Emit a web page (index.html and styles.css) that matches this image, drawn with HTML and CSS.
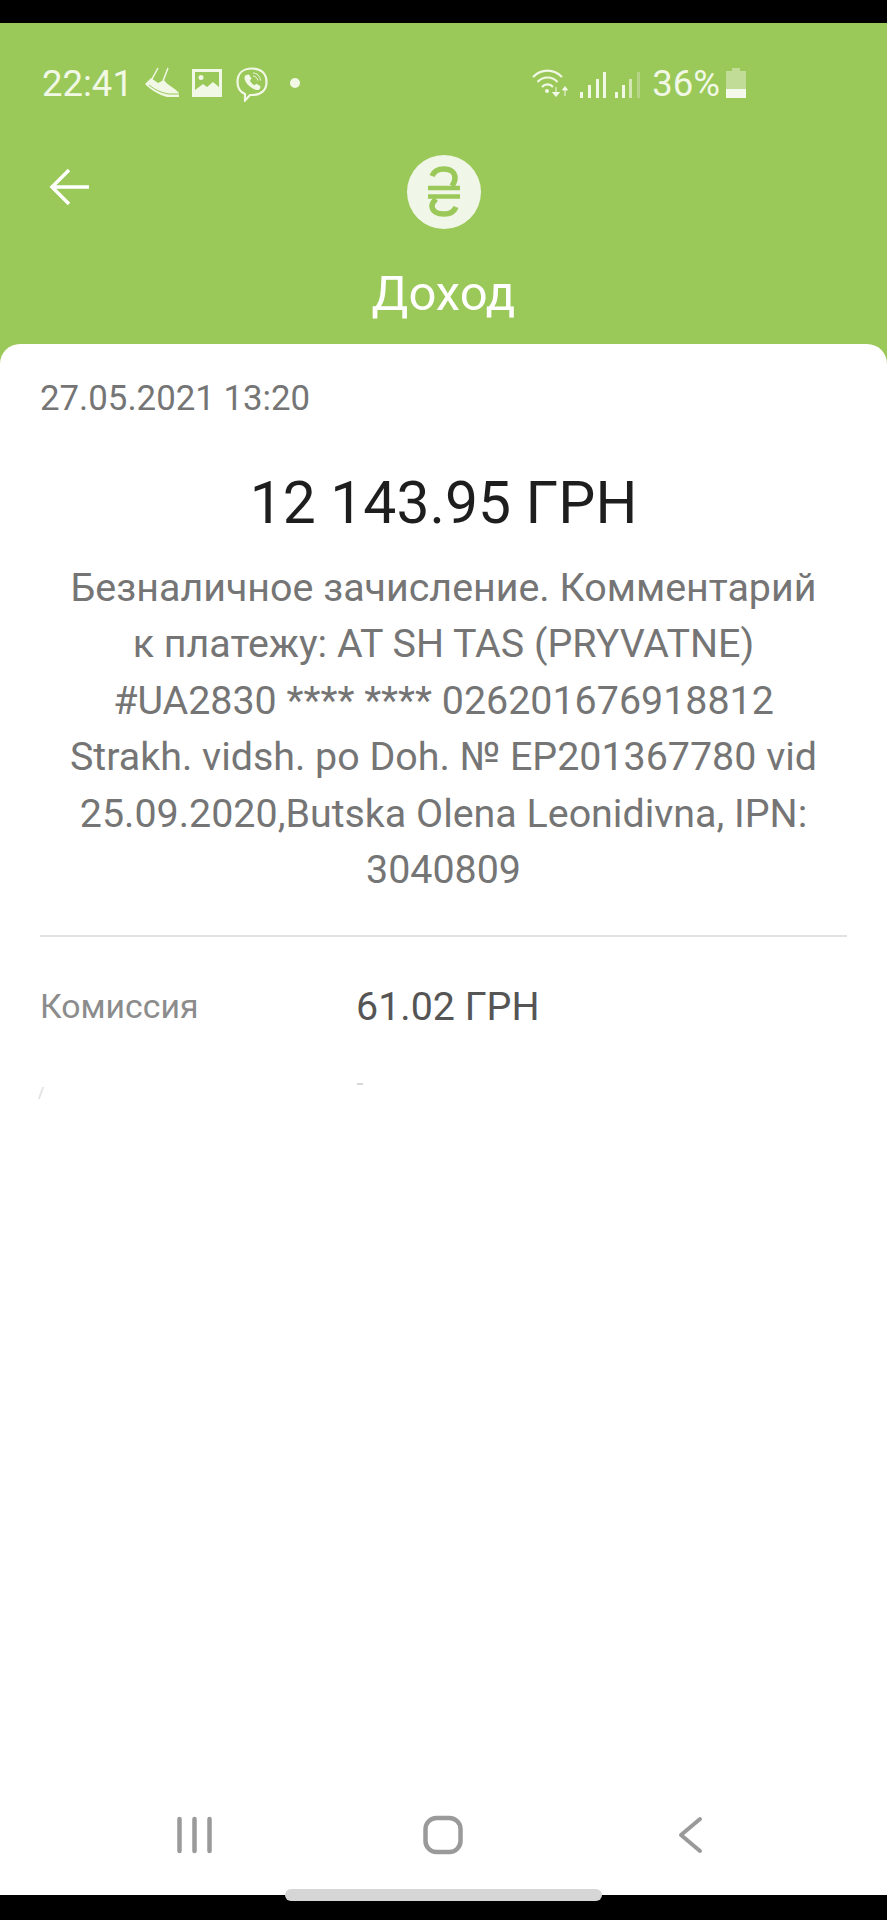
FILE: index.html
```html
<!DOCTYPE html>
<html lang="ru">
<head>
  <meta charset="UTF-8">
  <title>Доход</title>
  <link rel="stylesheet" href="styles.css">
</head>
<body>
  <div class="phone">
    <header class="top">
      <div class="status-bar">
        <span class="clock">22:41</span>
        <!-- shoe -->
        <svg class="ic-shoe" viewBox="0 0 36 32"><path d="M7 12l6-11M18 14l5-13" fill="none" stroke="#f1f8e6" stroke-width="1.500"/><path d="M0 17l6-6 7 5 6-3c3 5 11 8 15 13v4H22C14 28 6 23 0 17z" fill="#f1f8e6"/><path d="M4 18c6 5 13 8 20 9h10" fill="none" stroke="#9ac859" stroke-width="1"/></svg>
        <!-- picture -->
        <svg class="ic-pic" viewBox="0 0 30 28"><path d="M0 0h30v28H0z" fill="#f1f8e6"/><path d="M3 3h24v15l-6-5-6 5-4-3-8 6z" fill="#9ac859"/><circle cx="9" cy="8.500" r="2.500" fill="#f1f8e6"/></svg>
        <!-- viber -->
        <svg class="ic-viber" viewBox="0 0 32 35"><path d="M16 1.500c9 0 14.500 5 14.500 13.500S25 28 16 28h-2l-5 5.500V27C4 25 1.500 21 1.500 15 1.500 6.500 7 1.500 16 1.500z" fill="none" stroke="#f1f8e6" stroke-width="2.200"/><path d="M10 8l3-.5 2.500 4-1.500 2c.8 2 2.500 3.800 4.500 4.800l2-1.500 4 2.500-.5 2.500c-1 1.500-3 1.500-5 .7C13 20 9.500 16 8.500 11.500 8.300 10 9 8.800 10 8z" fill="#f1f8e6"/><path d="M17 6c4 0 7 3 7.500 7.500M17 9c2.500 0 4.500 2 4.800 4.500" fill="none" stroke="#f1f8e6" stroke-width="1"/></svg>
        <span class="dot"></span>
        <div class="status-right">
          <!-- wifi with arrows -->
          <svg class="ic-wifi" viewBox="0 0 38 29"><path d="M1 8c8-8.500 21-8.500 29 0M5.500 13c5.500-6 14.500-6 20 0M10 18c3-3.500 8-3.500 11 0" fill="none" stroke="#f1f8e6" stroke-width="2.200"/><circle cx="15" cy="22" r="2" fill="#f1f8e6"/><path d="M24 18v7M20.500 23.500l3.500 4 3.500-4z" fill="#f1f8e6" stroke="#f1f8e6" stroke-width="1"/><path d="M33 27v-7M30.500 21l2.500-3.500 2.500 3.500z" fill="#f1f8e6" stroke="#f1f8e6" stroke-width="1"/></svg>
          <svg class="ic-signal" viewBox="0 0 28 26"><path d="M2 20h3v6H2zM10 13h3v13h-3zM18 7h3v19h-3z" fill="#f1f8e6"/><path d="M25 0h3v26h-3z" fill="#f1f8e6"/></svg>
          <svg class="ic-signal ic-signal-weak" viewBox="0 0 28 26"><path d="M2 20h3v6H2zM9 13h3v13H9z" fill="#f1f8e6"/><path d="M16 7h3v19h-3z" fill="#d3e6b4"/><path d="M24 0h3v26h-3z" fill="#b5d488"/></svg>
          <span class="battery-text">36%</span>
          <svg class="ic-battery" viewBox="0 0 20 30"><path d="M6 0h8v3h6v18H0V3h6z" fill="#c0dc96"/><path d="M0 21h20v9H0z" fill="#f4f9ec"/></svg>
        </div>
      </div>
      <div class="nav-row">
        <svg class="ic-back" viewBox="0 0 42 38"><path d="M40 19H3M20 2L3 19l17 17" fill="none" stroke="#fff" stroke-width="3.500"/></svg>
        <!-- hryvnia badge -->
        <svg class="ic-uah" viewBox="0 0 74 74"><circle cx="37" cy="37" r="37" fill="#f0f6e8"/><path d="M25 21c2-5 7-7 12-7 7 0 11 4 11 9 0 3-1 5-3 8M29 44c-2 2-4 4-4 7 0 5 5 8 12 8 5 0 10-2 12-7" fill="none" stroke="#9ac859" stroke-width="5.500"/><path d="M21 33h32M21 41.500h32" fill="none" stroke="#9ac859" stroke-width="4.500"/></svg>
      </div>
      <h1 class="title">Доход</h1>
    </header>

    <main class="card">
      <div class="date">27.05.2021 13:20</div>
      <div class="amount">12 143.95 ГРН</div>
      <p class="desc">
        Безналичное зачисление. Комментарий<br>
        к платежу: AT SH TAS (PRYVATNE)<br>
        #UA2830 **** **** 026201676918812<br>
        Strakh. vidsh. po Doh. № EP201367780 vid<br>
        25.09.2020,Butska Olena Leonidivna, IPN:<br>
        3040809
      </p>
      <div class="divider"></div>
      <div class="row">
        <span class="row-label">Комиссия</span>
        <span class="row-value">61.02 ГРН</span>
      </div>
      <div class="row-ghost">
        <span class="ghost-a"></span>
        <span class="ghost-b"></span>
      </div>
    </main>

    <nav class="softkeys">
      <svg viewBox="0 0 48 40"><path d="M9.500 4v32M24.500 4v32M39.500 4v32" fill="none" stroke="#9a9a9a" stroke-width="4.500" stroke-linecap="round"/></svg>
      <svg viewBox="0 0 48 40"><rect x="6.500" y="3" width="35" height="34" rx="11" fill="none" stroke="#9a9a9a" stroke-width="4.500"/></svg>
      <svg viewBox="0 0 48 40"><path d="M33 4L14 20l19 16" fill="none" stroke="#9a9a9a" stroke-width="4" stroke-linecap="round" stroke-linejoin="round"/></svg>
    </nav>
    <div class="bottom-black"></div>
    <div class="pill"></div>
  </div>
</body>
</html>
```

FILE: styles.css
```css
html, body {
  margin: 0;
  padding: 0;
  background-color: #000;
}
.phone {
  position: relative;
  width: 887px;
  height: 1920px;
  overflow: hidden;
  display: flex;
  flex-direction: column;
  padding-top: 23px;
  box-sizing: border-box;
  font-family: Roboto, "Liberation Sans", sans-serif;
  background-color: #000;
}

/* green header */
.top {
  height: 341px;
  flex-shrink: 0;
  background-color: #9ac859;
  color: #f1f8e6;
}
.status-bar {
  display: flex;
  align-items: center;
  height: 44px;
  padding: 38px 141px 0 42px;
}
.clock {
  font-size: 36.500px;
  width: 103px;
}
.ic-shoe { width: 36px; height: 32px; }
.ic-pic { width: 30px; height: 28px; margin-left: 11px; }
.ic-viber { width: 32px; height: 35px; margin-left: 14px; margin-top: 2px; }
.dot {
  width: 10px;
  height: 10px;
  border-radius: 50%;
  background-color: #f1f8e6;
  margin-left: 22px;
}
.status-right {
  margin-left: auto;
  display: flex;
  align-items: center;
}
.ic-wifi { width: 38px; height: 29px; }
.ic-signal { width: 28px; height: 26px; margin-left: 8px; margin-top: 3px; }
.ic-signal-weak { margin-left: 7px; }
.battery-text {
  font-size: 36.500px;
  margin-left: 11px;
}
.ic-battery { width: 20px; height: 30px; margin-left: 6px; }

.nav-row {
  display: grid;
  grid-template-columns: 1fr auto 1fr;
  align-items: center;
  padding: 50px 49px 0;
}
.ic-back { width: 42px; height: 38px; margin-top: -10px; }
.ic-uah { width: 74px; height: 74px; }
.title {
  margin: 36px 0 0;
  font-size: 49px;
  font-weight: 400;
  line-height: 58px;
  text-align: center;
  color: #fff;
}

/* white sheet */
.card {
  flex: 1;
  margin-top: -20px;
  position: relative;
  background-color: #fff;
  border-radius: 20px 20px 0 0;
  padding: 34px 40px 0;
}
.date {
  font-size: 34.800px;
  line-height: 40px;
  color: #757575;
}
.amount {
  margin-top: 52px;
  font-size: 58.800px;
  line-height: 66px;
  text-align: center;
  color: #1e1e1e;
}
.desc {
  margin: 24px -20px 0;
  font-size: 39.400px;
  line-height: 56.400px;
  text-align: center;
  color: #757575;
}
.divider {
  margin-top: 37px;
  height: 2px;
  background-color: #e2e2e2;
}
.row {
  display: flex;
  align-items: center;
  margin-top: 46px;
  line-height: 48px;
}
.row-label {
  width: 316px;
  font-size: 33.800px;
  color: #8c8c8c;
}
.row-value {
  font-size: 39.400px;
  color: #555;
}
.row-ghost {
  display: flex;
  margin-top: 52px;
}
.ghost-a {
  width: 2px;
  height: 12px;
  background-color: #e4e4e4;
  transform: skewX(-20deg);
  margin-top: 4px;
}
.ghost-b {
  width: 6px;
  height: 2px;
  margin-left: 315px;
  background-color: #d8d8d8;
}

/* android buttons */
.softkeys {
  flex-shrink: 0;
  height: 80px;
  background-color: #fff;
  display: flex;
  justify-content: space-between;
  align-items: flex-start;
  padding: 0 172px 0 170px;
}
.softkeys svg {
  width: 48px;
  height: 40px;
}
.bottom-black {
  flex-shrink: 0;
  height: 25px;
  background-color: #000;
}
.pill {
  position: absolute;
  left: 285px;
  top: 1889px;
  width: 317px;
  height: 12px;
  border-radius: 6px;
  background-color: #d6d6d6;
}
```
